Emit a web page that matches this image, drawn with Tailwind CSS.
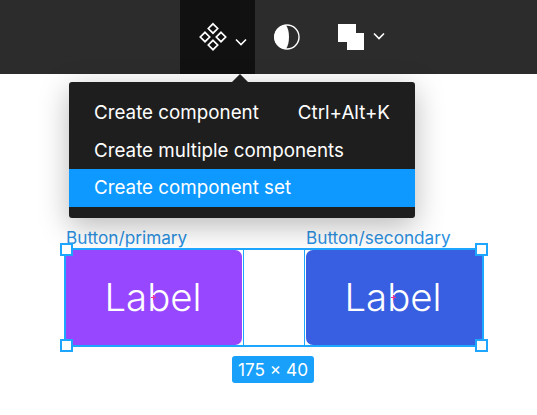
<!DOCTYPE html>
<html><head><meta charset="utf-8"><script src="https://cdn.jsdelivr.net/npm/@tailwindcss/browser@4"></script></head>
<body class="bg-white">
<div class="relative w-[537px] h-[415px] overflow-hidden bg-white font-['Inter',sans-serif]">
  <div class="flex h-[74px] bg-[#2c2c2c] pl-[180px]">
    <div class="flex w-[75px] items-center bg-[#111111] text-white">
      <svg class="ml-[18px]" width="30" height="30" viewBox="0 0 30 30" fill="none" stroke="white" stroke-width="1.7"><path d="M15 1.8 19.7 6.5 15 11.2 10.3 6.5Z"/><path d="M7 10.3 11.7 15 7 19.7 2.3 15Z"/><path d="M23 10.3 27.7 15 23 19.7 18.3 15Z"/><path d="M15 18.3 19.7 23 15 27.7 10.3 23Z"/></svg>
      <svg class="ml-[7px] mt-[9px]" width="12" height="8" viewBox="0 0 12 8" fill="none" stroke="white" stroke-width="1.6"><path d="M1 1.5 6 6.5 11 1.5"/></svg>
    </div>
    <div class="flex items-center">
      <svg class="ml-[19px]" width="26" height="26" viewBox="0 0 26 26"><circle cx="13" cy="13" r="12" fill="none" stroke="white" stroke-width="1.4"/><path d="M12 1a12 12 0 0 0 0 24c2-3 3-7 3-12s-1-9-3-12Z" fill="white"/></svg>
      <svg class="ml-[38px]" width="26" height="26" viewBox="0 0 26 26" fill="white"><rect x="0" y="0" width="18" height="18"/><rect x="9" y="9" width="17" height="17"/></svg>
      <svg class="ml-[9px] mb-[3px]" width="12" height="8" viewBox="0 0 12 8" fill="none" stroke="white" stroke-width="1.6"><path d="M1 1.5 6 6.5 11 1.5"/></svg>
    </div>
  </div>

  <div class="absolute left-[69px] top-[82px] w-[346px] rounded-[3px] bg-[#1e1e1e] py-[11px] text-[18.8px] text-white shadow-[0_8px_30px_rgba(0,0,0,0.28)]">
    <div class="absolute left-[163px] top-[-8px] size-0 border-x-[8px] border-b-[8px] border-x-transparent border-b-[#1e1e1e]"></div>
    <div class="flex h-[38px] items-center justify-between px-[25px] pt-[2px]"><span>Create component</span><span>Ctrl+Alt+K</span></div>
    <div class="flex h-[38px] items-center px-[25px] pt-[2px]">Create multiple components</div>
    <div class="flex h-[38px] items-center bg-[#0d99ff] px-[25px]">Create component set</div>
  </div>

  <div class="ml-[64px] mt-[153px] w-[420px]">
    <div class="flex h-[21px] items-center text-[17.2px] text-[#2b8fe0]">
      <span class="ml-[2px] w-[240px]">Button/primary</span><span>Button/secondary</span>
    </div>
    <div class="relative flex h-[99px] justify-between border-2 border-[#1ea5ff] bg-white">
      <div class="relative flex w-[176px] items-center justify-center rounded-[7px] bg-[#9747ff] pr-[2px] text-[38.4px] font-light text-white">Label<svg class="absolute left-[85px] top-[45px]" width="5" height="5" viewBox="0 0 5 5" stroke="#f0349a" stroke-width="1.2"><path d="M2.5 0v5M0 2.5h5"/></svg></div>
      <div class="absolute left-[177px] top-0 bottom-0 w-px bg-[#1ea5ff]"></div>
      <div class="absolute left-[238px] top-0 bottom-0 w-px bg-[#1ea5ff]"></div>
      <div class="relative flex w-[176px] items-center justify-center rounded-[7px] bg-[#385ee2] pr-[2px] text-[38.4px] font-light text-white">Label<svg class="absolute left-[85px] top-[45px]" width="5" height="5" viewBox="0 0 5 5" stroke="#f0349a" stroke-width="1.2"><path d="M2.5 0v5M0 2.5h5"/></svg></div>
      <div class="absolute left-[-6px] top-[-7px] size-[13px] border-2 border-[#1ea5ff] bg-white"></div>
      <div class="absolute right-[-6px] top-[-7px] size-[13px] border-2 border-[#1ea5ff] bg-white"></div>
      <div class="absolute left-[-6px] bottom-[-7px] size-[13px] border-2 border-[#1ea5ff] bg-white"></div>
      <div class="absolute right-[-6px] bottom-[-7px] size-[13px] border-2 border-[#1ea5ff] bg-white"></div>
    </div>
    <div class="mt-[9px] ml-[168px] flex h-[27px] w-[82px] items-center justify-center rounded-[3px] bg-[#18a0fb] text-[17.2px] text-white">175 × 40</div>
  </div>
</div>
</body></html>
